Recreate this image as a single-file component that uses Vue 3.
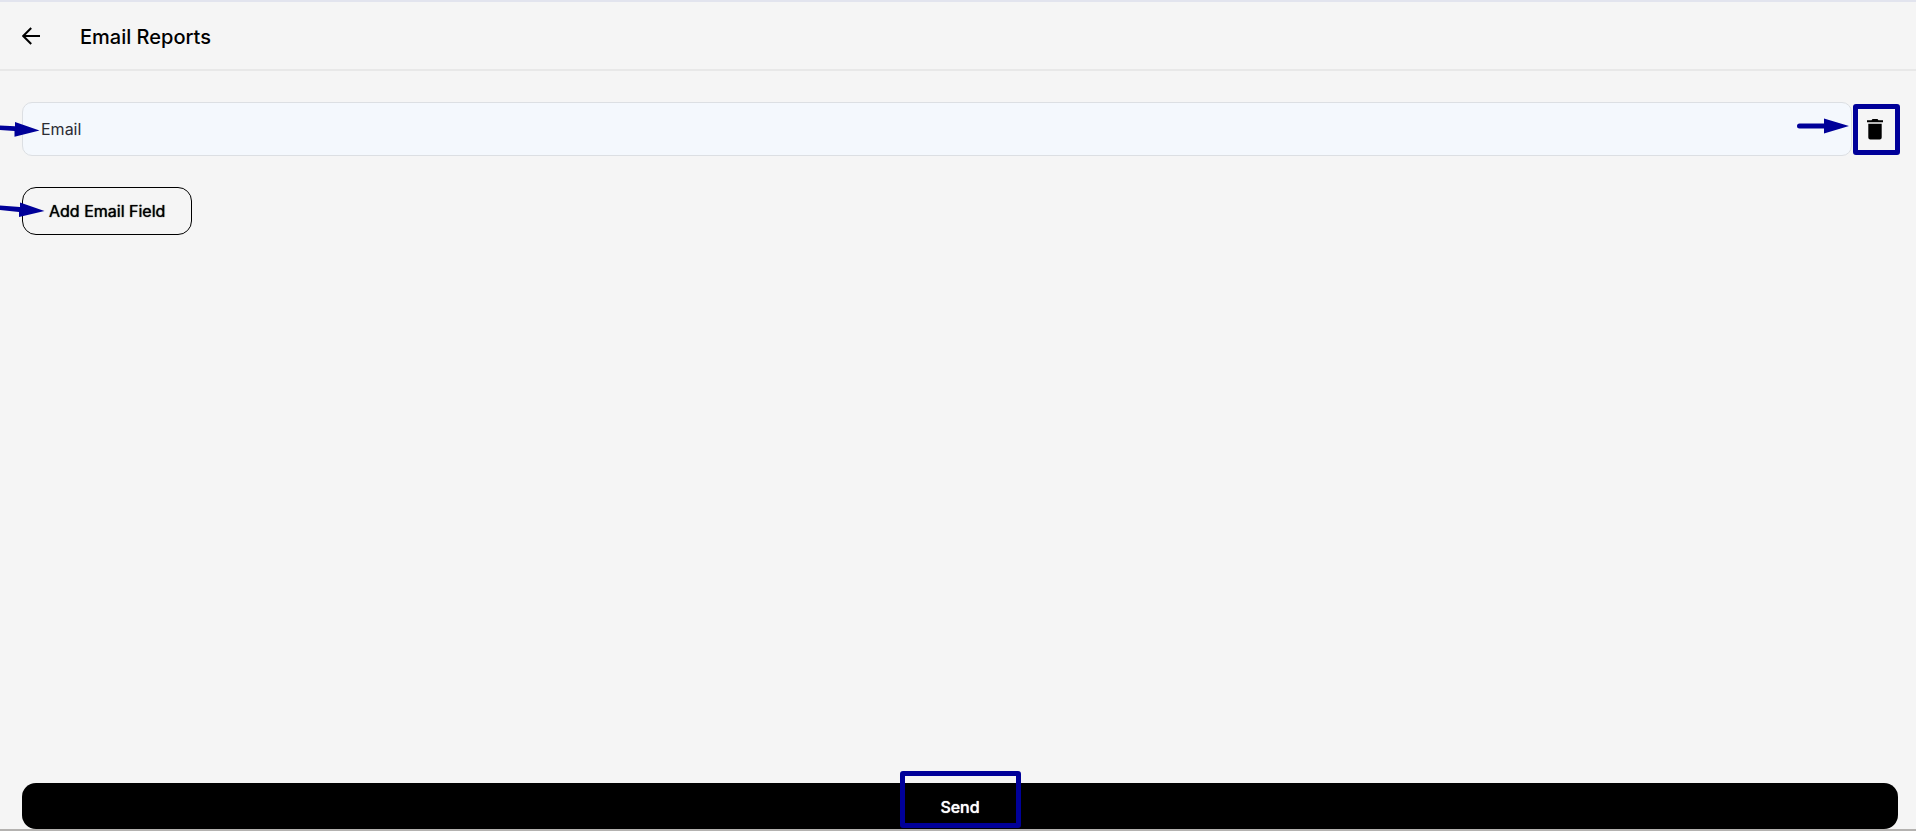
<script setup>
import { ref } from 'vue'

const emails = ref([''])

function addField() {
  emails.value.push('')
}

function removeField(index) {
  emails.value.splice(index, 1)
}
</script>

<template>
  <div class="page">
    <header class="bar">
      <button class="back" type="button" aria-label="Back">
        <svg width="18" height="18" viewBox="0 0 18 18" fill="none" stroke="#000" stroke-width="2">
          <path d="M18 9H1.5M9.2 1L1.2 9l8 8" />
        </svg>
      </button>
      <h1 class="title">Email Reports</h1>
    </header>

    <main class="content">
      <div v-for="(email, i) in emails" :key="i" class="row">
        <div class="field">
          <input v-model="emails[i]" class="input" type="email" placeholder="Email" aria-label="Email" />
          <svg class="pointer pointer-input" width="40" height="16" viewBox="0 0 40 16" fill="#000099">
            <path d="M0 3.4L15 4.2V0L39.5 8.500 14.500 14.800V9L0 8z" />
          </svg>
          <svg class="pointer pointer-delete" width="52" height="16" viewBox="0 0 52 16" fill="#000099">
            <path d="M2.500 5.500H27V.5L52 8 27 15.500V10.500H2.500a2.500 2.500 0 0 1 0-5z" />
          </svg>
        </div>
        <button class="delete" type="button" aria-label="Delete email field" @click="removeField(i)">
          <svg width="16" height="21" viewBox="0 0 16 21" fill="#000">
            <path d="M0 1.200H4.500L5.500 0h5l1 1.200H16V3.200H0zM1.300 4.800H14.700V18.500a2 2 0 0 1-2 2H3.300a2 2 0 0 1-2-2z" />
          </svg>
          <span class="frame frame-delete"></span>
        </button>
      </div>

      <div class="actions">
        <button class="add" type="button" @click="addField">Add Email Field</button>
        <svg class="pointer pointer-add" width="45" height="16" viewBox="0 0 45 16" fill="#000099">
          <path d="M0 3.500L20 5V.5L44.500 9 19 15V10L0 8z" />
        </svg>
      </div>
    </main>

    <footer class="footer">
      <button class="send" type="button">
        Send
        <span class="frame frame-send"></span>
      </button>
    </footer>
  </div>
</template>

<style>
body {
  background: #f5f5f5;
}
</style>

<style scoped>
.page {
  box-sizing: border-box;
  display: flex;
  flex-direction: column;
  min-height: 100vh;
  overflow: hidden;
  border-top: 2px solid #e2e4ee;
  border-bottom: 2px solid #b4b2b0;
  background: #f5f5f5;
  color: #000;
  font-family: Inter, "Liberation Sans", sans-serif;
}

button {
  box-sizing: border-box;
  margin: 0;
  padding: 0;
  border: 0;
  background: none;
  color: inherit;
  font: inherit;
  cursor: pointer;
}

.bar {
  display: flex;
  align-items: center;
  gap: 40px;
  height: 67px;
  padding: 0 22px;
  border-bottom: 2px solid #e8e8e8;
}

.back {
  display: flex;
}

.title {
  margin: 0;
  padding-top: 2px;
  font-size: 20px;
  font-weight: 500;
  line-height: 24px;
}

.content {
  flex: 1;
  padding: 31px 18px 31px 22px;
}

.row {
  display: flex;
  margin-bottom: 31px;
}

.field {
  position: relative;
  flex: 1;
}

.input {
  box-sizing: border-box;
  display: block;
  width: 100%;
  height: 54px;
  padding: 0 18px;
  border: 1px solid #dcdfe3;
  border-radius: 10px;
  outline: none;
  background: #f4f8fd;
  color: #1c1c22;
  font-family: inherit;
  font-size: 16px;
}

.input::placeholder {
  color: #2c2c34;
  opacity: 1;
}

.delete {
  position: relative;
  display: flex;
  align-items: center;
  justify-content: center;
  width: 46px;
}

.frame {
  position: absolute;
  box-sizing: border-box;
  border: 5px solid #000099;
  border-radius: 3px;
}

.frame-delete {
  top: 2px;
  left: 1px;
  width: 47px;
  height: 51px;
}

.actions {
  position: relative;
  display: flex;
}

.add {
  height: 48px;
  padding: 0 26px;
  border: 1px solid #000;
  border-radius: 14px;
  font-size: 16px;
  font-weight: 400;
  text-shadow: 0 0 1px #000;
}

.pointer {
  position: absolute;
  pointer-events: none;
}

.pointer-input {
  top: 20px;
  left: -22px;
}

.pointer-delete {
  top: 16px;
  right: 3px;
}

.pointer-add {
  top: 15px;
  left: -22px;
}

.footer {
  display: flex;
  padding: 0 18px 0 22px;
}

.send {
  position: relative;
  flex: 1;
  height: 46px;
  padding-top: 2px;
  border-radius: 14px;
  background: #000;
  color: #fff;
  font-size: 16px;
  font-weight: 500;
  text-shadow: 0 0 1px #fff;
}

.frame-send {
  bottom: 1px;
  left: 50%;
  width: 121px;
  height: 57px;
  margin-left: -60px;
}
</style>
